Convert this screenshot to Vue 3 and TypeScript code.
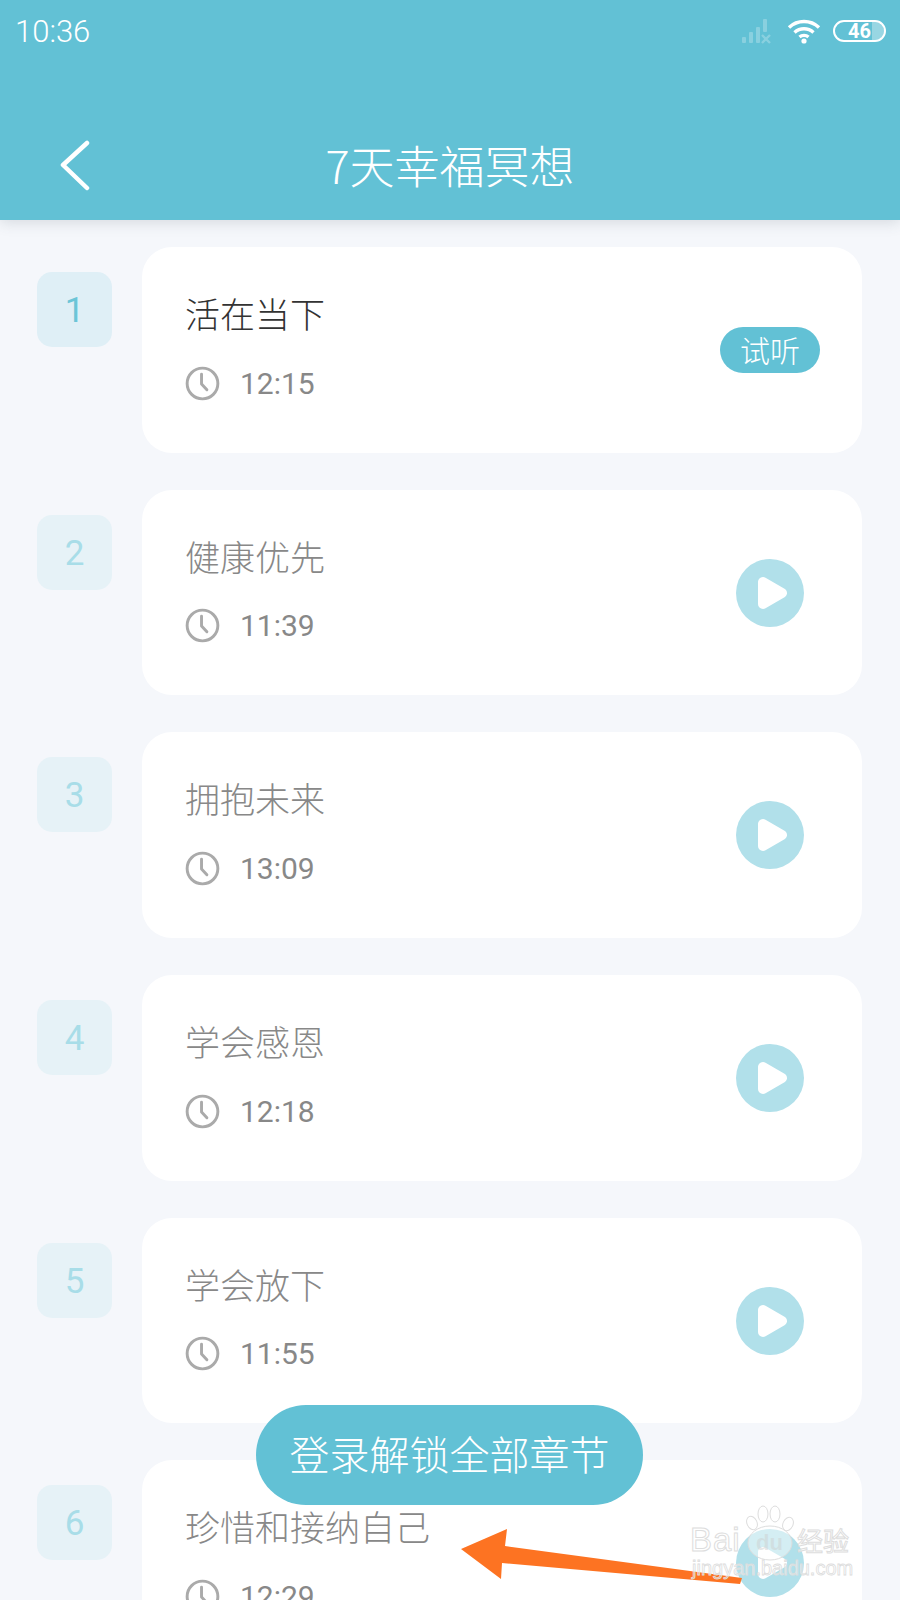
<script setup lang="ts">
interface Chapter {
  no: number
  title: string
  time: string
}

const chapters: Chapter[] = [
  { no: 1, title: '活在当下', time: '12:15' },
  { no: 2, title: '健康优先', time: '11:39' },
  { no: 3, title: '拥抱未来', time: '13:09' },
  { no: 4, title: '学会感恩', time: '12:18' },
  { no: 5, title: '学会放下', time: '11:55' },
  { no: 6, title: '珍惜和接纳自己', time: '12:29' }
]
</script>

<template>
  <div class="page">
    <header class="top">
      <div class="status">
        <span class="clock-time">10:36</span>
        <div class="status-icons">
          <svg class="signal" width="32" height="26" viewBox="0 0 32 26">
            <g fill="#fff" opacity="0.25">
              <rect x="1" y="19" width="4" height="6" rx="1" />
              <rect x="8" y="14" width="4" height="11" rx="1" />
              <rect x="15" y="9" width="4" height="16" rx="1" />
              <rect x="22" y="1" width="4" height="13" rx="1" />
              <path d="M21 17l8 8M29 17l-8 8" stroke="#fff" stroke-width="2.400" fill="none" />
            </g>
          </svg>
          <svg class="wifi" width="34" height="25" viewBox="0 0 34 25">
            <path d="M2 8.500C10.500 0.500 23.500 0.500 32 8.500M7.500 13.500C13 8.500 21 8.500 26.500 13.500" fill="none" stroke="#fff" stroke-width="3.400" />
            <path d="M12.500 18C15 15.800 19 15.800 21.500 18" fill="none" stroke="#fff" stroke-width="3.400" />
            <circle cx="17" cy="22" r="2.600" fill="#fff" />
          </svg>
          <div class="battery">
            <span class="battery-fill"></span>
            <span class="battery-num">46</span>
          </div>
        </div>
      </div>
      <div class="nav">
        <svg class="back" width="32" height="52" viewBox="0 0 32 52">
          <path d="M28 3L4 25l24 23" fill="none" stroke="#fff" stroke-width="4.500" stroke-linecap="round" stroke-linejoin="round" />
        </svg>
        <h1 class="nav-title">7天幸福冥想</h1>
      </div>
    </header>

    <main class="list">
      <div v-for="item in chapters" :key="item.no" class="row" :class="{ locked: item.no > 1 }">
        <div class="no">{{ item.no }}</div>
        <div class="card">
          <div class="info">
            <div class="title">{{ item.title }}</div>
            <div class="meta">
              <svg width="35" height="35" viewBox="0 0 36 36">
                <circle cx="18" cy="18" r="15.800" fill="none" stroke="#aaa" stroke-width="3" />
                <path d="M17 8.500V18.500l5.500 6" fill="none" stroke="#aaa" stroke-width="3" stroke-linecap="round" stroke-linejoin="round" />
              </svg>
              <span>{{ item.time }}</span>
            </div>
          </div>
          <span v-if="item.no === 1" class="try">试听</span>
          <svg v-else class="play" width="68" height="68" viewBox="0 0 68 68">
            <circle cx="34" cy="34" r="34" fill="#b1e0ea" />
            <path d="M27 23V45L46 34z" fill="#fff" stroke="#fff" stroke-width="10" stroke-linejoin="round" />
          </svg>
        </div>
      </div>
    </main>

    <button class="login">登录解锁全部章节</button>

    <svg class="arrow" width="300" height="70" viewBox="0 0 300 70">
      <polygon points="1,29 47,9 45,26 282,58 280,64 42,43 41,59" fill="#fd7322" />
    </svg>

    <svg class="mark" width="180" height="100" viewBox="0 0 180 100">
      <g fill="#fff" fill-opacity="0.45" stroke="#ddd" stroke-width="1">
        <text x="0" y="48" class="mark-en">Bai</text>
        <text x="107" y="48" class="mark-cn">经验</text>
        <text x="2" y="72" class="mark-url">jingyan.baidu.com</text>
        <ellipse cx="62" cy="20" rx="5" ry="7" transform="rotate(-25 62 20)" />
        <ellipse cx="73" cy="11" rx="5" ry="8" />
        <ellipse cx="85" cy="11" rx="5" ry="8" />
        <ellipse cx="98" cy="21" rx="5" ry="7" transform="rotate(25 98 21)" />
        <ellipse cx="80" cy="40" rx="22" ry="17" />
        <text x="66" y="47" class="mark-du">du</text>
      </g>
    </svg>
  </div>
</template>

<style scoped>
.page {
  position: relative;
  width: 900px;
  height: 1600px;
  overflow: hidden;
  background: #f5f7fb;
  font-family: "Noto Sans CJK SC", Roboto, sans-serif;
}
.top {
  position: relative;
  height: 220px;
  background: #62c1d5;
  box-shadow: 0 2px 14px rgba(60, 80, 90, 0.18);
  color: #fff;
}
.status {
  height: 62px;
  display: flex;
  align-items: center;
  justify-content: space-between;
  padding: 0 14px 0 15px;
}
.clock-time {
  font-family: Roboto, sans-serif;
  font-weight: 300;
  font-size: 31px;
}
.status-icons {
  display: flex;
  align-items: center;
}
.signal {
  margin-right: 14px;
}
.wifi {
  margin-right: 12px;
}
.battery {
  position: relative;
  width: 53px;
  height: 22px;
  border: 2px solid #fff;
  border-radius: 11px;
  box-sizing: border-box;
  overflow: hidden;
  text-align: center;
}
.battery-fill {
  position: absolute;
  right: 0;
  top: 0;
  bottom: 0;
  width: 25%;
  background: rgba(255, 255, 255, 0.35);
}
.battery-num {
  position: relative;
  font-family: Roboto, sans-serif;
  font-weight: 700;
  font-size: 20px;
  line-height: 18px;
  display: block;
}
.nav {
  position: relative;
  height: 60px;
  margin-top: 73px;
  display: flex;
  align-items: center;
  justify-content: center;
}
.back {
  position: absolute;
  left: 59px;
  top: 5px;
}
.nav-title {
  margin: 0;
  font-size: 45px;
  font-weight: 300;
  line-height: 54px;
}
.list {
  padding: 27px 38px 0 37px;
  display: flex;
  flex-direction: column;
  gap: 37px;
}
.row {
  display: flex;
  align-items: flex-start;
  gap: 30px;
}
.no {
  width: 75px;
  height: 75px;
  margin-top: 25px;
  flex: none;
  border-radius: 15px;
  background: #dfeff6;
  color: #6cc5d7;
  font-family: Roboto, sans-serif;
  font-size: 35px;
  line-height: 78px;
  text-align: center;
}
.locked .no {
  background: #e6f2f7;
  color: #a8dde8;
}
.card {
  flex: 1;
  height: 205.700px;
  flex-shrink: 0;
  box-sizing: border-box;
  display: flex;
  align-items: center;
  justify-content: space-between;
  padding: 0 42px 0 43px;
  border-radius: 30px;
  background: #fff;
}
.info {
  align-self: flex-start;
  padding-top: 41px;
}
.title {
  font-size: 35px;
  font-weight: 300;
  line-height: 50px;
  color: #333;
}
.locked .title {
  color: #888;
}
.meta {
  display: flex;
  align-items: center;
  gap: 20px;
  height: 40px;
  margin-top: 25px;
  font-family: Roboto, sans-serif;
  font-size: 30px;
  color: #888;
}
.try {
  width: 100px;
  height: 46px;
  border-radius: 23px;
  background: #62c1d5;
  color: #fff;
  font-size: 30px;
  font-weight: 300;
  line-height: 45px;
  text-align: center;
}
.play {
  margin-right: 16px;
}
.login {
  position: absolute;
  left: 256px;
  top: 1405px;
  width: 387px;
  height: 100px;
  padding: 0 0 4px;
  border: 0;
  border-radius: 50px;
  background: #62c1d5;
  color: #fff;
  font-family: inherit;
  font-size: 40px;
  font-weight: 300;
}
.arrow {
  position: absolute;
  left: 460px;
  top: 1520px;
}
.mark {
  position: absolute;
  left: 690px;
  top: 1503px;
}
.mark-en {
  font-family: "Liberation Sans", sans-serif;
  font-size: 33px;
  letter-spacing: 1px;
}
.mark-cn {
  font-family: "Noto Sans CJK SC", sans-serif;
  font-size: 26px;
}
.mark-url {
  font-family: "Liberation Sans", sans-serif;
  font-size: 20px;
  stroke-width: 0.8;
}
.mark-du {
  font-family: "Liberation Sans", sans-serif;
  font-size: 22px;
  font-weight: 700;
  fill: #ccc;
  stroke: none;
}
</style>

<style>
body {
  margin: 0;
}
</style>
